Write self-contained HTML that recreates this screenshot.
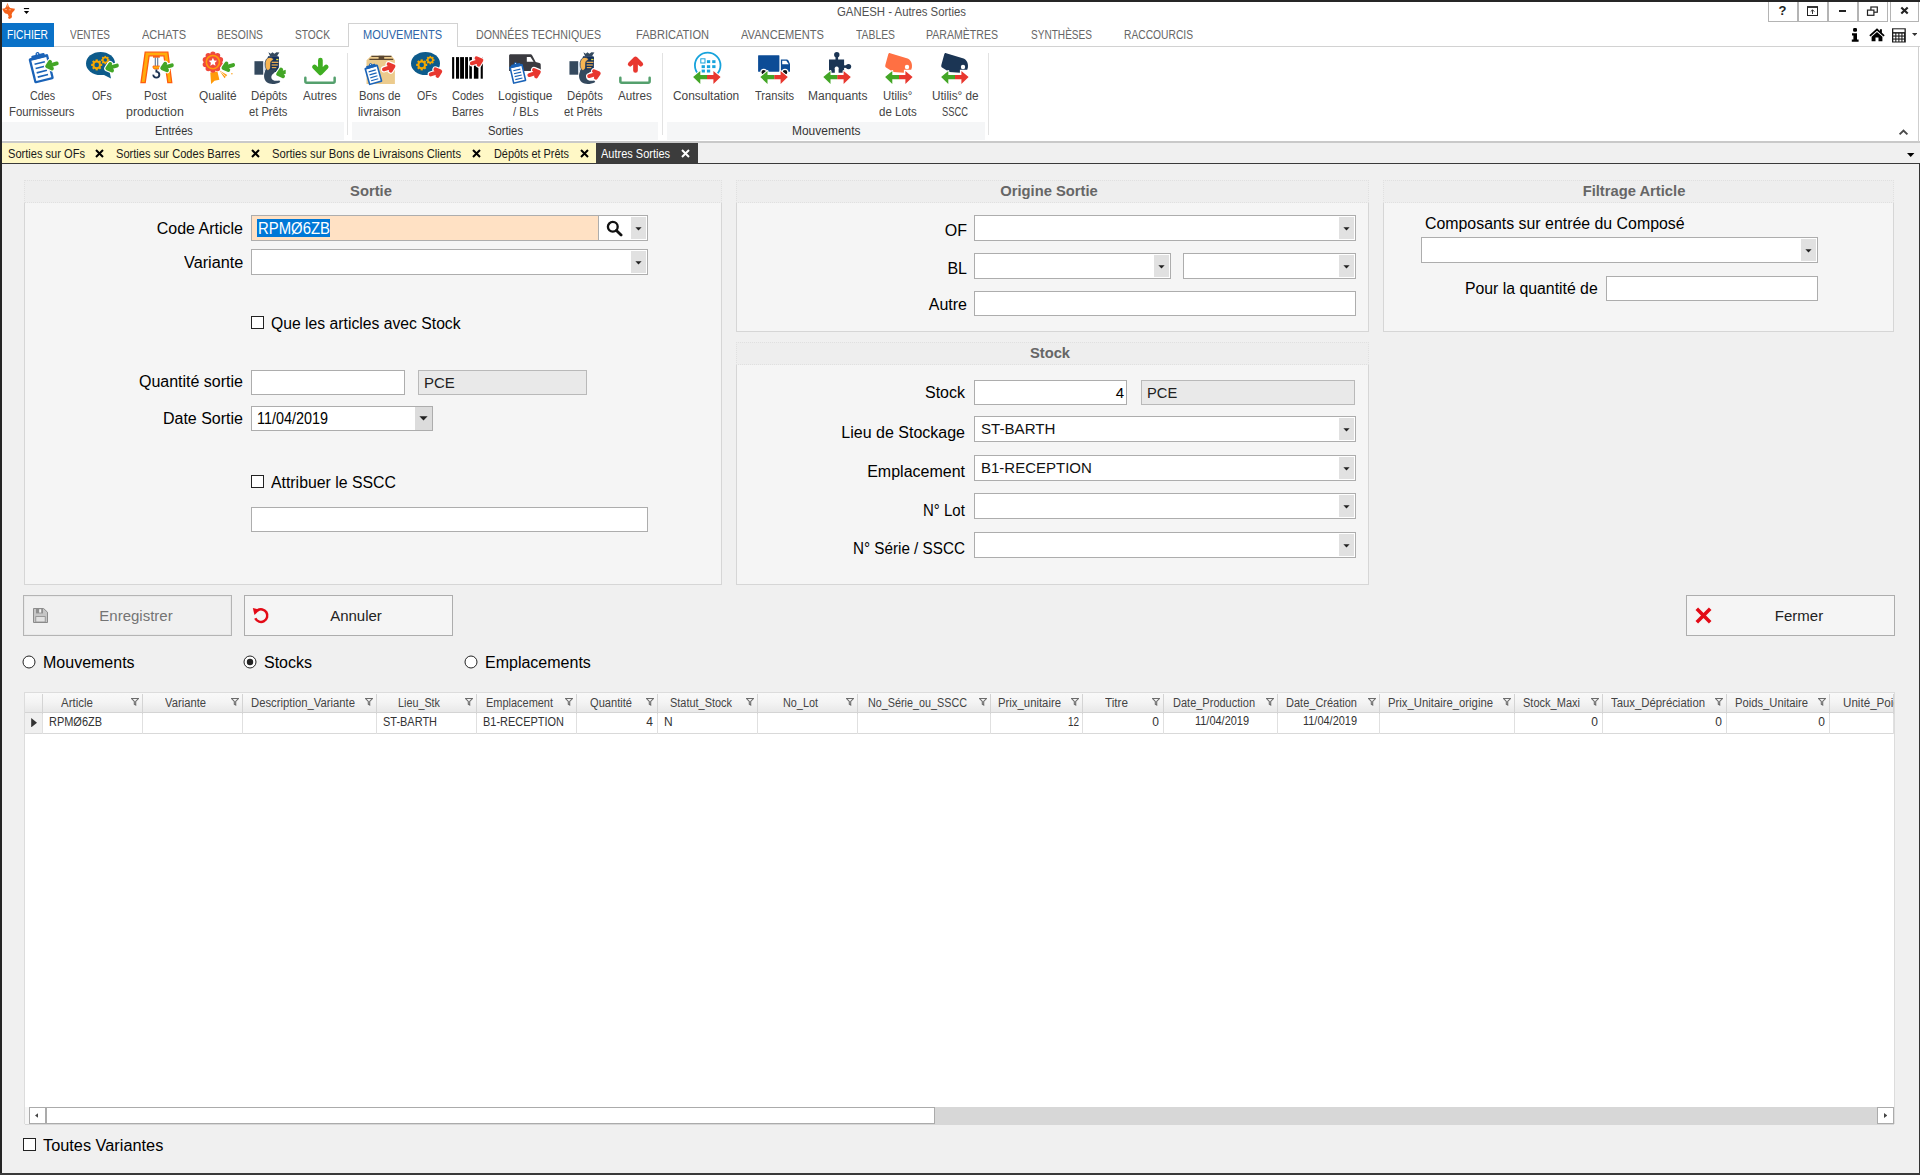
<!DOCTYPE html>
<html><head><meta charset="utf-8"><title>GANESH - Autres Sorties</title>
<style>
html,body{margin:0;padding:0;}
body{width:1920px;height:1175px;overflow:hidden;background:#f0f0f0;position:relative;
font-family:"Liberation Sans",sans-serif;}
#w{position:absolute;left:0;top:0;width:1920px;height:1175px;overflow:hidden;}
#w div,#w span.t,#w svg{position:absolute;box-sizing:border-box;}
span.t{white-space:pre;line-height:normal;}
</style></head><body><div id="w">
<div style="left:0px;top:0px;width:1920px;height:141px;background:#ffffff;"></div>
<div style="left:0px;top:141px;width:1920px;height:2px;background:#c9c9c9;"></div>
<svg style="left:0px;top:0px" width="18" height="22" viewBox="0 0 18 22"><path d="M7.5 3L8.9 6.6L10.2 8L15 8.7L14.2 10.7L12.4 12.6L11.6 14.6L12 16.4L11.4 18L9.4 18.9L8 18L8.7 16.3L7.6 14L5.4 13.6L4 12.2L2.2 8.8L5 8.2L6.1 6.6Z" fill="#f4611a"/><path d="M7.5 3.4L8.4 6.8H6.6Z" fill="#f9a36c"/><path d="M5 9.6H7M8.8 9.8H11" stroke="#fbb98b" stroke-width="0.8"/></svg>
<svg style="left:23px;top:7px" width="8" height="8" viewBox="0 0 8 8"><rect x="0.9" y="1" width="5.2" height="1.1" fill="#000"/><path d="M0.9 3.9h5.2L3.5 7z" fill="#000"/></svg>
<span class="t" style="left:837.00px;top:5px;font-size:12px;color:#505050;transform:scaleX(0.9482);transform-origin:0 0;">GANESH - Autres Sorties</span>
<div style="left:1768px;top:2px;width:30px;height:20px;background:#fff;border:1px solid #b4b4b4;border-top:none;"></div>
<div style="left:1798px;top:2px;width:30px;height:20px;background:#fff;border:1px solid #b4b4b4;border-top:none;"></div>
<div style="left:1828px;top:2px;width:30px;height:20px;background:#fff;border:1px solid #b4b4b4;border-top:none;"></div>
<div style="left:1858px;top:2px;width:30px;height:20px;background:#fff;border:1px solid #b4b4b4;border-top:none;"></div>
<div style="left:1890px;top:2px;width:29px;height:20px;background:#fff;border:1px solid #b4b4b4;border-top:none;"></div>
<span class="t" style="left:1778.6px;top:3px;font-size:13px;font-weight:bold;color:#222">?</span><svg style="left:1807px;top:6px" width="11" height="10" viewBox="0 0 11 10"><rect x="0.5" y="1" width="10" height="8.5" fill="none" stroke="#222" stroke-width="1"/><rect x="0" y="0.2" width="11" height="1.6" fill="#222"/><path d="M5.5 8V4M3.7 5.6L5.5 3.8L7.3 5.6" fill="none" stroke="#222" stroke-width="0.9"/></svg><div style="left:1839px;top:10px;width:7px;height:2px;background:#222"></div><svg style="left:1866px;top:6px" width="13" height="11" viewBox="0 0 13 11"><rect x="4.9" y="1" width="6.4" height="5.2" fill="none" stroke="#222" stroke-width="1.2"/><rect x="1.5" y="4.1" width="6.4" height="5.2" fill="#fff" stroke="#222" stroke-width="1.2"/></svg><svg style="left:1900px;top:6px" width="9" height="9" viewBox="0 0 9 9"><path d="M1.3 1.4L7.7 7.6M7.7 1.4L1.3 7.6" stroke="#222" stroke-width="2.1" fill="none"/></svg>
<svg style="left:1851px;top:28px" width="8" height="14" viewBox="0 0 8 14"><rect x="2.1" y="0" width="3.9" height="3.7" rx="1.2" fill="#000"/><path d="M1 5.2H6V11.4H7.6V13.8H0.8V11.4H2.4V7.4H1Z" fill="#000"/></svg><svg style="left:1869px;top:28px" width="16" height="14" viewBox="0 0 16 14"><path d="M8 0.3L0.3 7.2L1.5 8.5L8 2.8L14.5 8.5L15.7 7.2L12.9 4.7V1.2H10.9V2.9Z" fill="#000"/><path d="M8 4L2.6 8.7V13.2H6.5V9.4H9.5V13.2H13.4V8.7Z" fill="#000"/></svg><svg style="left:1892px;top:28px" width="14" height="15" viewBox="0 0 14 15"><rect x="0" y="0.3" width="13.8" height="14.2" fill="#1a1a1a"/><rect x="1.3" y="1.3" width="11.2" height="2.8" fill="#fff"/><rect x="1.30" y="5.60" width="2.0" height="1.9" fill="#fff"/><rect x="4.35" y="5.60" width="2.0" height="1.9" fill="#fff"/><rect x="7.40" y="5.60" width="2.0" height="1.9" fill="#fff"/><rect x="10.45" y="5.60" width="1.6" height="1.9" fill="#fff"/><rect x="1.30" y="8.60" width="2.0" height="1.9" fill="#fff"/><rect x="4.35" y="8.60" width="2.0" height="1.9" fill="#fff"/><rect x="7.40" y="8.60" width="2.0" height="1.9" fill="#fff"/><rect x="10.45" y="8.60" width="1.6" height="1.9" fill="#fff"/><rect x="1.30" y="11.60" width="2.0" height="1.9" fill="#fff"/><rect x="4.35" y="11.60" width="2.0" height="1.9" fill="#fff"/><rect x="7.40" y="11.60" width="2.0" height="1.9" fill="#fff"/><rect x="10.45" y="11.60" width="1.6" height="1.9" fill="#fff"/></svg><svg style="left:1911.8px;top:33.2px" width="5.4" height="3" viewBox="0 0 5.4 3"><path d="M0 0h5.4L2.7 3z" fill="#333"/></svg>
<div style="left:0px;top:46px;width:1920px;height:1px;background:#d2d2d2;"></div>
<div style="left:2px;top:23px;width:52px;height:24px;background:#0a72c8;"></div>
<span class="t" style="left:7.00px;top:28px;font-size:12px;color:#fff;transform:scaleX(0.8541);transform-origin:0 0;">FICHIER</span>
<span class="t" style="left:70.00px;top:28px;font-size:12px;color:#666;transform:scaleX(0.8331);transform-origin:0 0;">VENTES</span>
<span class="t" style="left:142.00px;top:28px;font-size:12px;color:#666;transform:scaleX(0.9208);transform-origin:0 0;">ACHATS</span>
<span class="t" style="left:217.00px;top:28px;font-size:12px;color:#666;transform:scaleX(0.8622);transform-origin:0 0;">BESOINS</span>
<span class="t" style="left:295.00px;top:28px;font-size:12px;color:#666;transform:scaleX(0.8511);transform-origin:0 0;">STOCK</span>
<span class="t" style="left:476.00px;top:28px;font-size:12px;color:#666;transform:scaleX(0.8857);transform-origin:0 0;">DONNÉES TECHNIQUES</span>
<span class="t" style="left:636.00px;top:28px;font-size:12px;color:#666;transform:scaleX(0.9226);transform-origin:0 0;">FABRICATION</span>
<span class="t" style="left:741.00px;top:28px;font-size:12px;color:#666;transform:scaleX(0.9266);transform-origin:0 0;">AVANCEMENTS</span>
<span class="t" style="left:856.00px;top:28px;font-size:12px;color:#666;transform:scaleX(0.8641);transform-origin:0 0;">TABLES</span>
<span class="t" style="left:926.00px;top:28px;font-size:12px;color:#666;transform:scaleX(0.8802);transform-origin:0 0;">PARAMÈTRES</span>
<span class="t" style="left:1031.00px;top:28px;font-size:12px;color:#666;transform:scaleX(0.8392);transform-origin:0 0;">SYNTHÈSES</span>
<span class="t" style="left:1124.00px;top:28px;font-size:12px;color:#666;transform:scaleX(0.8553);transform-origin:0 0;">RACCOURCIS</span>
<div style="left:348px;top:23px;width:110px;height:24px;background:#fff;border:1px solid #d2d2d2;border-bottom:none;"></div>
<span class="t" style="left:363.00px;top:28px;font-size:12px;color:#2b64a8;transform:scaleX(0.9185);transform-origin:0 0;">MOUVEMENTS</span>
<div style="left:2px;top:122px;width:342px;height:18px;background:#f5f6f7;"></div>
<div style="left:352px;top:122px;width:306px;height:18px;background:#f5f6f7;"></div>
<div style="left:667px;top:122px;width:318px;height:18px;background:#f5f6f7;"></div>
<div style="left:347px;top:53px;width:1px;height:82px;background:#e2e2e2;"></div>
<div style="left:662px;top:53px;width:1px;height:82px;background:#e2e2e2;"></div>
<div style="left:988px;top:53px;width:1px;height:82px;background:#e2e2e2;"></div>
<span class="t" style="left:155.40px;top:124px;font-size:12px;color:#333;transform:scaleX(0.9116);transform-origin:0 0;">Entrées</span>
<span class="t" style="left:488.10px;top:124px;font-size:12px;color:#333;transform:scaleX(0.9371);transform-origin:0 0;">Sorties</span>
<span class="t" style="left:791.50px;top:124px;font-size:12px;color:#333;transform:scaleX(0.9971);transform-origin:0 0;">Mouvements</span>
<span class="t" style="left:30.00px;top:89px;font-size:12px;color:#444;transform:scaleX(0.8924);transform-origin:0 0;">Cdes</span>
<span class="t" style="left:8.50px;top:105px;font-size:12px;color:#444;transform:scaleX(0.9443);transform-origin:0 0;">Fournisseurs</span>
<svg style="left:26px;top:52px;overflow:visible" width="32" height="32" viewBox="0 0 32 32"><g transform="translate(2.4 6.6) rotate(-14) scale(1.0)"><rect x="0" y="0" width="20" height="25.8" rx="1.6" fill="#1a63b8"/><rect x="2.3" y="2.8" width="15.4" height="20.8" fill="#fff"/><rect x="3.2" y="-1.9" width="13.6" height="4.4" rx="1.2" fill="#1a63b8"/><circle cx="10" cy="-2.1" r="2.1" fill="#1a63b8"/><circle cx="10" cy="-2.4" r="0.7" fill="#fff"/><path d="M4.6 7h10.6M4.6 11.4h10.6M4.6 15.8h10.6M4.6 20.2h10.6" stroke="#1a63b8" stroke-width="1.7" fill="none"/></g><path d="M5.1 0H-4.4M-0.9 -3.4L-4.9 0L-0.9 3.4" transform="translate(25.85 12.9) rotate(-16) scale(1.0)" fill="none" stroke="#fff" stroke-width="6.2" stroke-linecap="round" stroke-linejoin="round"/><path d="M5.1 0H-4.4M-0.9 -3.4L-4.9 0L-0.9 3.4" transform="translate(25.85 12.9) rotate(-16) scale(1.0)" fill="none" stroke="#43a626" stroke-width="3.9" stroke-linecap="round" stroke-linejoin="round"/></svg>
<span class="t" style="left:92.30px;top:89px;font-size:12px;color:#444;transform:scaleX(0.8648);transform-origin:0 0;">OFs</span>
<svg style="left:86px;top:52px;overflow:visible" width="32" height="32" viewBox="0 0 32 32"><ellipse cx="14.5" cy="11.5" rx="14.5" ry="11.5" fill="#0d5b8b"/><path d="M15 21.5L25 26.4L23.2 18Z" fill="#0d5b8b"/><g transform="translate(10.7 12.9)"><rect x="-1.10" y="-5.50" width="2.20" height="2.75" transform="rotate(0.0)" fill="#f6a800"/><rect x="-1.10" y="-5.50" width="2.20" height="2.75" transform="rotate(45.0)" fill="#f6a800"/><rect x="-1.10" y="-5.50" width="2.20" height="2.75" transform="rotate(90.0)" fill="#f6a800"/><rect x="-1.10" y="-5.50" width="2.20" height="2.75" transform="rotate(135.0)" fill="#f6a800"/><rect x="-1.10" y="-5.50" width="2.20" height="2.75" transform="rotate(180.0)" fill="#f6a800"/><rect x="-1.10" y="-5.50" width="2.20" height="2.75" transform="rotate(225.0)" fill="#f6a800"/><rect x="-1.10" y="-5.50" width="2.20" height="2.75" transform="rotate(270.0)" fill="#f6a800"/><rect x="-1.10" y="-5.50" width="2.20" height="2.75" transform="rotate(315.0)" fill="#f6a800"/><circle r="4.29" fill="#f6a800"/><circle r="2.31" fill="#0d5b8b"/></g><g transform="translate(19.3 8.1)"><rect x="-0.84" y="-4.20" width="1.68" height="2.10" transform="rotate(0.0)" fill="#f6a800"/><rect x="-0.84" y="-4.20" width="1.68" height="2.10" transform="rotate(45.0)" fill="#f6a800"/><rect x="-0.84" y="-4.20" width="1.68" height="2.10" transform="rotate(90.0)" fill="#f6a800"/><rect x="-0.84" y="-4.20" width="1.68" height="2.10" transform="rotate(135.0)" fill="#f6a800"/><rect x="-0.84" y="-4.20" width="1.68" height="2.10" transform="rotate(180.0)" fill="#f6a800"/><rect x="-0.84" y="-4.20" width="1.68" height="2.10" transform="rotate(225.0)" fill="#f6a800"/><rect x="-0.84" y="-4.20" width="1.68" height="2.10" transform="rotate(270.0)" fill="#f6a800"/><rect x="-0.84" y="-4.20" width="1.68" height="2.10" transform="rotate(315.0)" fill="#f6a800"/><circle r="3.28" fill="#f6a800"/><circle r="1.76" fill="#0d5b8b"/></g><path d="M5.1 0H-4.4M-0.9 -3.4L-4.9 0L-0.9 3.4" transform="translate(26 15) rotate(-16) scale(1.0)" fill="none" stroke="#fff" stroke-width="6.2" stroke-linecap="round" stroke-linejoin="round"/><path d="M5.1 0H-4.4M-0.9 -3.4L-4.9 0L-0.9 3.4" transform="translate(26 15) rotate(-16) scale(1.0)" fill="none" stroke="#43a626" stroke-width="3.9" stroke-linecap="round" stroke-linejoin="round"/></svg>
<span class="t" style="left:144.35px;top:89px;font-size:12px;color:#444;transform:scaleX(0.937);transform-origin:0 0;">Post</span>
<span class="t" style="left:126.45px;top:105px;font-size:12px;color:#444;transform:scaleX(1.0332);transform-origin:0 0;">production</span>
<svg style="left:139px;top:52px;overflow:visible" width="32" height="32" viewBox="0 0 32 32"><path d="M6.2 0.2H28.85L32.75 30.6H28.85L24.95 3.8H10.1L6.2 30.6H2Z" fill="#ffac0a" stroke="#ff5e0e" stroke-width="1.3"/><rect x="14" y="3.8" width="6.8" height="1.9" fill="#ff5e0e"/><path d="M16.3 5.6V14M18.7 5.6V14" stroke="#5b7594" stroke-width="1.1"/><path d="M14 14H20.8V15.4L19.8 17H15L14 15.4Z" fill="#ffac0a" stroke="#ff5e0e" stroke-width="0.8"/><path d="M17.4 17.4V19.6C21.4 20 21.2 25.6 17.4 25.6C15.2 25.6 14.2 24 14.4 22.6" fill="none" stroke="#1d3352" stroke-width="1.9"/><path d="M5.1 0H-4.4M-0.9 -3.4L-4.9 0L-0.9 3.4" transform="translate(27.95 14.75) rotate(-16) scale(1.0)" fill="none" stroke="#fff" stroke-width="6.2" stroke-linecap="round" stroke-linejoin="round"/><path d="M5.1 0H-4.4M-0.9 -3.4L-4.9 0L-0.9 3.4" transform="translate(27.95 14.75) rotate(-16) scale(1.0)" fill="none" stroke="#43a626" stroke-width="3.9" stroke-linecap="round" stroke-linejoin="round"/></svg>
<span class="t" style="left:199.35px;top:89px;font-size:12px;color:#444;transform:scaleX(0.9863);transform-origin:0 0;">Qualité</span>
<svg style="left:202px;top:52px;overflow:visible" width="32" height="32" viewBox="0 0 32 32"><path d="M8.3 20.6L9.1 31.9L12.5 28.8L17.4 27.8L15.4 19.6Z" fill="#ff9a0a"/><path d="M17.6 18.6L25.2 23.1L22.6 26.2L19.4 21.4Z" fill="#ff9a0a"/><path d="M18.9 19.7L23.9 24.7" stroke="#fff" stroke-width="0.9"/><circle cx="29.9" cy="21.8" r="0.7" fill="#ff9a0a"/><circle cx="18.41" cy="12.54" r="2.7" fill="#f0493c"/><circle cx="15.54" cy="16.49" r="2.7" fill="#f0493c"/><circle cx="10.90" cy="18.00" r="2.7" fill="#f0493c"/><circle cx="6.26" cy="16.49" r="2.7" fill="#f0493c"/><circle cx="3.39" cy="12.54" r="2.7" fill="#f0493c"/><circle cx="3.39" cy="7.66" r="2.7" fill="#f0493c"/><circle cx="6.26" cy="3.71" r="2.7" fill="#f0493c"/><circle cx="10.90" cy="2.20" r="2.7" fill="#f0493c"/><circle cx="15.54" cy="3.71" r="2.7" fill="#f0493c"/><circle cx="18.41" cy="7.66" r="2.7" fill="#f0493c"/><circle cx="10.9" cy="10.1" r="8.6" fill="#f0493c"/><circle cx="10.9" cy="10.1" r="6.6" fill="none" stroke="#ff9a0a" stroke-width="1.6"/><polygon points="10.90,5.70 12.13,8.40 15.08,8.74 12.90,10.75 13.49,13.66 10.90,12.20 8.31,13.66 8.90,10.75 6.72,8.74 9.67,8.40" fill="#fff"/><path d="M5.1 0H-4.4M-0.9 -3.4L-4.9 0L-0.9 3.4" transform="translate(26.2 14.5) rotate(-16) scale(1.0)" fill="none" stroke="#fff" stroke-width="6.2" stroke-linecap="round" stroke-linejoin="round"/><path d="M5.1 0H-4.4M-0.9 -3.4L-4.9 0L-0.9 3.4" transform="translate(26.2 14.5) rotate(-16) scale(1.0)" fill="none" stroke="#43a626" stroke-width="3.9" stroke-linecap="round" stroke-linejoin="round"/></svg>
<span class="t" style="left:251.48px;top:89px;font-size:12px;color:#444;transform:scaleX(0.9534);transform-origin:0 0;">Dépôts</span>
<span class="t" style="left:249.40px;top:105px;font-size:12px;color:#444;transform:scaleX(0.9287);transform-origin:0 0;">et Prêts</span>
<svg style="left:253px;top:52px;overflow:visible" width="32" height="32" viewBox="0 0 32 32"><clipPath id="cpb"><rect x="-2" y="-2" width="34.7" height="40"/></clipPath><g clip-path="url(#cpb)"><g transform="translate(0.4 0)"><path d="M15 0.3L17.4 1.7L19 0.2L21 1.7L23 0.2L26 0.4L24.3 3L23.6 4.6H16.8L16 2.8Z" fill="#34495e"/><path d="M14.6 4.2H24.6Q25.8 4.4 25.6 6L25.4 17.6L22.4 20H12.4Z" fill="#14305a"/><path d="M11.6 19.4C10 23 10.4 27.6 13.4 30.2C16.6 32.6 22 32.5 26.9 29.9L26 28.4C22 29.4 18.5 28.6 18 26C17.6 24 18.6 22.4 20.8 21L23 17.6H12Z" fill="#34495e"/><rect x="1.05" y="9.2" width="8.8" height="13.5" fill="#34495e"/><rect x="9.8" y="9.9" width="1.6" height="9.5" fill="#cfdcea"/><path d="M17.6 5.6C14 4.6 11.8 7.8 11.8 12C11.8 15.6 12.8 18.4 14.6 18.4C16.6 18.4 17.4 16 17.2 13C17 10.4 17.6 8.6 19.6 8.2C20.6 6.8 19.4 6 17.6 5.6Z" fill="#f7b552" stroke="#14305a" stroke-width="0.7"/><rect x="18.2" y="9.7" width="6.8" height="1.2" fill="#f7b552"/><rect x="18.2" y="12.4" width="6.2" height="1.2" fill="#f7b552"/><rect x="18.4" y="15.1" width="4.6" height="1.1" fill="#f7b552"/><rect x="22.8" y="6.9" width="2.2" height="1.3" fill="#e6e44a"/></g><path d="M5.1 0H-4.4M-0.9 -3.4L-4.9 0L-0.9 3.4" transform="translate(29.9 20.7) rotate(-16) scale(1.0)" fill="none" stroke="#fff" stroke-width="6.2" stroke-linecap="round" stroke-linejoin="round"/><path d="M5.1 0H-4.4M-0.9 -3.4L-4.9 0L-0.9 3.4" transform="translate(29.9 20.7) rotate(-16) scale(1.0)" fill="none" stroke="#43a626" stroke-width="3.9" stroke-linecap="round" stroke-linejoin="round"/></g></svg>
<span class="t" style="left:303.10px;top:89px;font-size:12px;color:#444;transform:scaleX(0.9745);transform-origin:0 0;">Autres</span>
<svg style="left:304px;top:52px;overflow:visible" width="32" height="32" viewBox="0 0 32 32"><path d="M16.4 8.2V20.6M10.5 14.9L16.4 20.9L22.2 14.9" fill="none" stroke="#3fae22" stroke-width="4.7" stroke-linecap="round" stroke-linejoin="round"/><path d="M1.35 25.7V29.2Q1.35 30.65 2.8 30.65H29.2Q30.65 30.65 30.65 29.2V25.7" fill="none" stroke="#54a06d" stroke-width="2.5" stroke-linecap="round"/></svg>
<span class="t" style="left:358.50px;top:89px;font-size:12px;color:#444;transform:scaleX(0.9424);transform-origin:0 0;">Bons de</span>
<span class="t" style="left:357.52px;top:105px;font-size:12px;color:#444;transform:scaleX(0.9712);transform-origin:0 0;">livraison</span>
<svg style="left:363px;top:52px;overflow:visible" width="32" height="32" viewBox="0 0 32 32"><path d="M8.2 3.8H28.6L31.9 8.2V31.9H3.5V8.2Z" fill="#eccb8d"/><path d="M8.4 4.4H28.4M6.4 7.4H30.2" stroke="#5a4630" stroke-width="1.3"/><rect x="15.6" y="3.8" width="5.6" height="4.2" fill="#5a4630"/><g transform="translate(1.2 16.05) rotate(-15.8) scale(0.7)"><rect x="0" y="0" width="20" height="25.8" rx="1.6" fill="#1a63b8"/><rect x="2.3" y="2.8" width="15.4" height="20.8" fill="#fff"/><rect x="3.2" y="-1.9" width="13.6" height="4.4" rx="1.2" fill="#1a63b8"/><circle cx="10" cy="-2.1" r="2.1" fill="#1a63b8"/><circle cx="10" cy="-2.4" r="0.7" fill="#fff"/><path d="M4.6 7h10.6M4.6 11.4h10.6M4.6 15.8h10.6M4.6 20.2h10.6" stroke="#1a63b8" stroke-width="1.7" fill="none"/></g><path d="M5.1 0H-4.4M-0.9 -3.4L-4.9 0L-0.9 3.4" transform="translate(25.8 15.7) rotate(162) scale(1.0)" fill="none" stroke="#fff" stroke-width="6.2" stroke-linecap="round" stroke-linejoin="round"/><path d="M5.1 0H-4.4M-0.9 -3.4L-4.9 0L-0.9 3.4" transform="translate(25.8 15.7) rotate(162) scale(1.0)" fill="none" stroke="#e8372f" stroke-width="3.9" stroke-linecap="round" stroke-linejoin="round"/></svg>
<span class="t" style="left:416.90px;top:89px;font-size:12px;color:#444;transform:scaleX(0.8825);transform-origin:0 0;">OFs</span>
<svg style="left:411px;top:52px;overflow:visible" width="32" height="32" viewBox="0 0 32 32"><ellipse cx="14.5" cy="11.5" rx="14.5" ry="11.5" fill="#0d5b8b"/><g transform="translate(10.7 12.9)"><rect x="-1.10" y="-5.50" width="2.20" height="2.75" transform="rotate(0.0)" fill="#f6a800"/><rect x="-1.10" y="-5.50" width="2.20" height="2.75" transform="rotate(45.0)" fill="#f6a800"/><rect x="-1.10" y="-5.50" width="2.20" height="2.75" transform="rotate(90.0)" fill="#f6a800"/><rect x="-1.10" y="-5.50" width="2.20" height="2.75" transform="rotate(135.0)" fill="#f6a800"/><rect x="-1.10" y="-5.50" width="2.20" height="2.75" transform="rotate(180.0)" fill="#f6a800"/><rect x="-1.10" y="-5.50" width="2.20" height="2.75" transform="rotate(225.0)" fill="#f6a800"/><rect x="-1.10" y="-5.50" width="2.20" height="2.75" transform="rotate(270.0)" fill="#f6a800"/><rect x="-1.10" y="-5.50" width="2.20" height="2.75" transform="rotate(315.0)" fill="#f6a800"/><circle r="4.29" fill="#f6a800"/><circle r="2.31" fill="#0d5b8b"/></g><g transform="translate(19.3 8.1)"><rect x="-0.84" y="-4.20" width="1.68" height="2.10" transform="rotate(0.0)" fill="#f6a800"/><rect x="-0.84" y="-4.20" width="1.68" height="2.10" transform="rotate(45.0)" fill="#f6a800"/><rect x="-0.84" y="-4.20" width="1.68" height="2.10" transform="rotate(90.0)" fill="#f6a800"/><rect x="-0.84" y="-4.20" width="1.68" height="2.10" transform="rotate(135.0)" fill="#f6a800"/><rect x="-0.84" y="-4.20" width="1.68" height="2.10" transform="rotate(180.0)" fill="#f6a800"/><rect x="-0.84" y="-4.20" width="1.68" height="2.10" transform="rotate(225.0)" fill="#f6a800"/><rect x="-0.84" y="-4.20" width="1.68" height="2.10" transform="rotate(270.0)" fill="#f6a800"/><rect x="-0.84" y="-4.20" width="1.68" height="2.10" transform="rotate(315.0)" fill="#f6a800"/><circle r="3.28" fill="#f6a800"/><circle r="1.76" fill="#0d5b8b"/></g><path d="M5.1 0H-4.4M-0.9 -3.4L-4.9 0L-0.9 3.4" transform="translate(24.6 20.9) rotate(162) scale(1.0)" fill="none" stroke="#fff" stroke-width="6.2" stroke-linecap="round" stroke-linejoin="round"/><path d="M5.1 0H-4.4M-0.9 -3.4L-4.9 0L-0.9 3.4" transform="translate(24.6 20.9) rotate(162) scale(1.0)" fill="none" stroke="#e8372f" stroke-width="3.9" stroke-linecap="round" stroke-linejoin="round"/></svg>
<span class="t" style="left:452.23px;top:89px;font-size:12px;color:#444;transform:scaleX(0.9153);transform-origin:0 0;">Codes</span>
<span class="t" style="left:451.50px;top:105px;font-size:12px;color:#444;transform:scaleX(0.894);transform-origin:0 0;">Barres</span>
<svg style="left:451px;top:52px;overflow:visible" width="32" height="32" viewBox="0 0 32 32"><rect x="1.1" y="5.1" width="2.1" height="21.6" fill="#000"/><rect x="5" y="5.1" width="3.1" height="21.6" fill="#000"/><rect x="9.1" y="5.1" width="3.9" height="21.6" fill="#000"/><rect x="14.1" y="5.1" width="2.9" height="21.6" fill="#000"/><rect x="18.3" y="5.1" width="2.6" height="21.6" fill="#000"/><rect x="22.9" y="5.1" width="4.5" height="21.6" fill="#000"/><rect x="29.7" y="5.1" width="2.1" height="21.6" fill="#000"/><path d="M5.1 0H-4.4M-0.9 -3.4L-4.9 0L-0.9 3.4" transform="translate(25.7 9.7) rotate(162) scale(1.0)" fill="none" stroke="#fff" stroke-width="6.2" stroke-linecap="round" stroke-linejoin="round"/><path d="M5.1 0H-4.4M-0.9 -3.4L-4.9 0L-0.9 3.4" transform="translate(25.7 9.7) rotate(162) scale(1.0)" fill="none" stroke="#e8372f" stroke-width="3.9" stroke-linecap="round" stroke-linejoin="round"/></svg>
<span class="t" style="left:497.50px;top:89px;font-size:12px;color:#444;transform:scaleX(0.9943);transform-origin:0 0;">Logistique</span>
<span class="t" style="left:512.50px;top:105px;font-size:12px;color:#444;transform:scaleX(0.9362);transform-origin:0 0;">/ BLs</span>
<svg style="left:508px;top:52px;overflow:visible" width="32" height="32" viewBox="0 0 32 32"><path d="M2.6 2.25H22C23.2 2.25 23.8 2.7 24.4 3.7L27.7 10L31.4 11C32.2 11.2 32.6 11.8 32.7 12.6L32.9 18.9H1.1V3.75C1.1 2.8 1.7 2.25 2.6 2.25Z" fill="#3a3a3f"/><path d="M18.8 5.1H22.5L25.6 9.8H18.8Z" fill="#fff"/><g transform="translate(1.1 14.75) rotate(-13) scale(0.69)"><rect x="0" y="0" width="20" height="25.8" rx="1.6" fill="#1a63b8"/><rect x="2.3" y="2.8" width="15.4" height="20.8" fill="#fff"/><rect x="3.2" y="-1.9" width="13.6" height="4.4" rx="1.2" fill="#1a63b8"/><circle cx="10" cy="-2.1" r="2.1" fill="#1a63b8"/><circle cx="10" cy="-2.4" r="0.7" fill="#fff"/><path d="M4.6 7h10.6M4.6 11.4h10.6M4.6 15.8h10.6M4.6 20.2h10.6" stroke="#1a63b8" stroke-width="1.7" fill="none"/></g><path d="M5.1 0H-4.4M-0.9 -3.4L-4.9 0L-0.9 3.4" transform="translate(26.2 21.5) rotate(162) scale(1.0)" fill="none" stroke="#fff" stroke-width="6.2" stroke-linecap="round" stroke-linejoin="round"/><path d="M5.1 0H-4.4M-0.9 -3.4L-4.9 0L-0.9 3.4" transform="translate(26.2 21.5) rotate(162) scale(1.0)" fill="none" stroke="#e8372f" stroke-width="3.9" stroke-linecap="round" stroke-linejoin="round"/></svg>
<span class="t" style="left:566.85px;top:89px;font-size:12px;color:#444;transform:scaleX(0.9442);transform-origin:0 0;">Dépôts</span>
<span class="t" style="left:564.40px;top:105px;font-size:12px;color:#444;transform:scaleX(0.9287);transform-origin:0 0;">et Prêts</span>
<svg style="left:568px;top:52px;overflow:visible" width="32" height="32" viewBox="0 0 32 32"><g transform="translate(0.4 0)"><path d="M15 0.3L17.4 1.7L19 0.2L21 1.7L23 0.2L26 0.4L24.3 3L23.6 4.6H16.8L16 2.8Z" fill="#34495e"/><path d="M14.6 4.2H24.6Q25.8 4.4 25.6 6L25.4 17.6L22.4 20H12.4Z" fill="#14305a"/><path d="M11.6 19.4C10 23 10.4 27.6 13.4 30.2C16.6 32.6 22 32.5 26.9 29.9L26 28.4C22 29.4 18.5 28.6 18 26C17.6 24 18.6 22.4 20.8 21L23 17.6H12Z" fill="#34495e"/><rect x="1.05" y="9.2" width="8.8" height="13.5" fill="#34495e"/><rect x="9.8" y="9.9" width="1.6" height="9.5" fill="#cfdcea"/><path d="M17.6 5.6C14 4.6 11.8 7.8 11.8 12C11.8 15.6 12.8 18.4 14.6 18.4C16.6 18.4 17.4 16 17.2 13C17 10.4 17.6 8.6 19.6 8.2C20.6 6.8 19.4 6 17.6 5.6Z" fill="#f7b552" stroke="#14305a" stroke-width="0.7"/><rect x="18.2" y="9.7" width="6.8" height="1.2" fill="#f7b552"/><rect x="18.2" y="12.4" width="6.2" height="1.2" fill="#f7b552"/><rect x="18.4" y="15.1" width="4.6" height="1.1" fill="#f7b552"/><rect x="22.8" y="6.9" width="2.2" height="1.3" fill="#e6e44a"/></g><path d="M5.1 0H-4.4M-0.9 -3.4L-4.9 0L-0.9 3.4" transform="translate(26.05 22.7) rotate(164) scale(1.0)" fill="none" stroke="#fff" stroke-width="6.2" stroke-linecap="round" stroke-linejoin="round"/><path d="M5.1 0H-4.4M-0.9 -3.4L-4.9 0L-0.9 3.4" transform="translate(26.05 22.7) rotate(164) scale(1.0)" fill="none" stroke="#e8372f" stroke-width="3.9" stroke-linecap="round" stroke-linejoin="round"/></svg>
<span class="t" style="left:618.10px;top:89px;font-size:12px;color:#444;transform:scaleX(0.9745);transform-origin:0 0;">Autres</span>
<svg style="left:619px;top:52px;overflow:visible" width="32" height="32" viewBox="0 0 32 32"><path d="M16.5 18.4V7M11.2 12.2L16.5 6.9L21.8 12.2" fill="none" stroke="#e8372f" stroke-width="4.7" stroke-linecap="round" stroke-linejoin="round"/><path d="M1.35 25.7V29.2Q1.35 30.65 2.8 30.65H29.2Q30.65 30.65 30.65 29.2V25.7" fill="none" stroke="#54a06d" stroke-width="2.5" stroke-linecap="round"/></svg>
<span class="t" style="left:673.12px;top:89px;font-size:12px;color:#444;transform:scaleX(0.9931);transform-origin:0 0;">Consultation</span>
<svg style="left:690px;top:52px;overflow:visible" width="32" height="32" viewBox="0 0 32 32"><circle cx="17.7" cy="13.35" r="12.8" fill="none" stroke="#17a3dc" stroke-width="1.8"/><rect x="10.8" y="6.8" width="4.2" height="4.2" fill="#fff" stroke="#17a3dc" stroke-width="1"/><rect x="16.9" y="8.2" width="3.3" height="2.9" fill="#17a3dc"/><rect x="22.2" y="8.2" width="3.3" height="2.9" fill="#17a3dc"/><rect x="11.6" y="13.2" width="3.3" height="2.9" fill="#17a3dc"/><rect x="16.9" y="13.2" width="3.3" height="2.9" fill="#17a3dc"/><rect x="22.2" y="13.2" width="3.3" height="2.9" fill="#17a3dc"/><rect x="11.6" y="17.6" width="3.3" height="2.9" fill="#17a3dc"/><rect x="16.9" y="17.6" width="3.3" height="2.9" fill="#17a3dc"/><g transform="translate(0.0 0)"><path d="M3.1 25.1L10.3 19.1V22.9H17V27.3H10.3V31.9ZM30.6 25.1L23.4 19.1V22.9H17V27.3H23.4V31.9Z" fill="#fff" stroke="#fff" stroke-width="2" stroke-linejoin="round"/><path d="M30.6 25.1L23.4 19.1V22.9H17V27.3H23.4V31.9Z" fill="#e8372f"/><path d="M3.1 25.1L10.3 19.1V22.9H17V27.3H10.3V31.9Z" fill="#43a626"/></g></svg>
<span class="t" style="left:755.00px;top:89px;font-size:12px;color:#444;transform:scaleX(0.9235);transform-origin:0 0;">Transits</span>
<svg style="left:758px;top:52px;overflow:visible" width="32" height="32" viewBox="0 0 32 32"><rect x="0.1" y="3.2" width="21.3" height="16.55" rx="0.6" fill="#0c4c96"/><path d="M22.9 7.6H28.4C29.6 7.6 30.3 8.2 30.9 9.4L32 12V19.75H22.9Z" fill="#0c4c96"/><path d="M24.2 8.8H28.25L30.75 12.25H24.2Z" fill="#fff"/><circle cx="5.75" cy="20.2" r="2.9" fill="#111" stroke="#fff" stroke-width="1.2"/><circle cx="27" cy="20.2" r="2.9" fill="#111" stroke="#fff" stroke-width="1.2"/><g transform="translate(-0.8 0)"><path d="M3.1 25.1L10.3 19.1V22.9H17V27.3H10.3V31.9ZM30.6 25.1L23.4 19.1V22.9H17V27.3H23.4V31.9Z" fill="#fff" stroke="#fff" stroke-width="2" stroke-linejoin="round"/><path d="M30.6 25.1L23.4 19.1V22.9H17V27.3H23.4V31.9Z" fill="#e8372f"/><path d="M3.1 25.1L10.3 19.1V22.9H17V27.3H10.3V31.9Z" fill="#43a626"/></g></svg>
<span class="t" style="left:807.50px;top:89px;font-size:12px;color:#444;transform:scaleX(1.0004);transform-origin:0 0;">Manquants</span>
<svg style="left:821px;top:52px;overflow:visible" width="32" height="32" viewBox="0 0 32 32"><circle cx="15.8" cy="2.7" r="2.7" fill="#1b3554"/><rect x="14.5" y="4" width="2.6" height="4.4" fill="#1b3554"/><circle cx="27.5" cy="14.6" r="2.7" fill="#1b3554"/><rect x="22.6" y="13.3" width="3.6" height="2.6" fill="#1b3554"/><path d="M8 7.5H23.1V20.8H17.6V17.6A2.1 2.1 0 1 0 13.8 17.6V20.8H8Z" fill="#1b3554"/><g transform="translate(-0.8 0)"><path d="M3.1 25.1L10.3 19.1V22.9H17V27.3H10.3V31.9ZM30.6 25.1L23.4 19.1V22.9H17V27.3H23.4V31.9Z" fill="#fff" stroke="#fff" stroke-width="2" stroke-linejoin="round"/><path d="M30.6 25.1L23.4 19.1V22.9H17V27.3H23.4V31.9Z" fill="#e8372f"/><path d="M3.1 25.1L10.3 19.1V22.9H17V27.3H10.3V31.9Z" fill="#43a626"/></g></svg>
<span class="t" style="left:883.48px;top:89px;font-size:12px;color:#444;transform:scaleX(0.9497);transform-origin:0 0;">Utilis°</span>
<span class="t" style="left:879.38px;top:105px;font-size:12px;color:#444;transform:scaleX(0.959);transform-origin:0 0;">de Lots</span>
<svg style="left:882px;top:52px;overflow:visible" width="32" height="32" viewBox="0 0 32 32"><path d="M8.2 1.2L25.6 6.6C28.4 7.6 30.6 11.6 29.9 15.4L29.2 17.7H21.9V20.8L11.3 19.9L4 15.6C3.2 15 3.1 14 3.4 12.8L6.2 2.6C6.5 1.4 7.2 0.9 8.2 1.2Z" fill="#ff7043"/><circle cx="25" cy="15" r="2.2" fill="#fff"/><g transform="translate(0.0 0)"><path d="M3.1 25.1L10.3 19.1V22.9H17V27.3H10.3V31.9ZM30.6 25.1L23.4 19.1V22.9H17V27.3H23.4V31.9Z" fill="#fff" stroke="#fff" stroke-width="2" stroke-linejoin="round"/><path d="M30.6 25.1L23.4 19.1V22.9H17V27.3H23.4V31.9Z" fill="#e8372f"/><path d="M3.1 25.1L10.3 19.1V22.9H17V27.3H10.3V31.9Z" fill="#43a626"/></g></svg>
<span class="t" style="left:931.50px;top:89px;font-size:12px;color:#444;transform:scaleX(0.9815);transform-origin:0 0;">Utilis° de</span>
<span class="t" style="left:941.65px;top:105px;font-size:12px;color:#444;transform:scaleX(0.7768);transform-origin:0 0;">SSCC</span>
<svg style="left:938px;top:52px;overflow:visible" width="32" height="32" viewBox="0 0 32 32"><path d="M8.2 1.2L25.6 6.6C28.4 7.6 30.6 11.6 29.9 15.4L29.2 17.7H21.9V20.8L11.3 19.9L4 15.6C3.2 15 3.1 14 3.4 12.8L6.2 2.6C6.5 1.4 7.2 0.9 8.2 1.2Z" fill="#1b3554"/><circle cx="25" cy="15" r="2.2" fill="#fff"/><g transform="translate(0.0 0)"><path d="M3.1 25.1L10.3 19.1V22.9H17V27.3H10.3V31.9ZM30.6 25.1L23.4 19.1V22.9H17V27.3H23.4V31.9Z" fill="#fff" stroke="#fff" stroke-width="2" stroke-linejoin="round"/><path d="M30.6 25.1L23.4 19.1V22.9H17V27.3H23.4V31.9Z" fill="#e8372f"/><path d="M3.1 25.1L10.3 19.1V22.9H17V27.3H10.3V31.9Z" fill="#43a626"/></g></svg>
<svg style="left:1898px;top:128px" width="11" height="8" viewBox="0 0 11 8"><path d="M1.6 6.4L5.5 2.5L9.4 6.4" fill="none" stroke="#4a4a4a" stroke-width="1.9"/></svg>
<div style="left:2px;top:143px;width:594px;height:20px;background:#fff8c6;"></div>
<div style="left:596px;top:143px;width:102px;height:20px;background:#3c3c3c;"></div>
<div style="left:0px;top:163px;width:1920px;height:1px;background:#3a3a3a;"></div>
<span class="t" style="left:8.00px;top:147px;font-size:12px;color:#1a1a1a;transform:scaleX(0.9238);transform-origin:0 0;">Sorties sur OFs</span>
<svg style="left:94.5px;top:149.0px" width="9" height="9" viewBox="0 0 9 9"><path d="M1 1L8 8M8 1L1 8" stroke="#000" stroke-width="2" fill="none"/></svg>
<span class="t" style="left:116.00px;top:147px;font-size:12px;color:#1a1a1a;transform:scaleX(0.925);transform-origin:0 0;">Sorties sur Codes Barres</span>
<svg style="left:250.5px;top:149.0px" width="9" height="9" viewBox="0 0 9 9"><path d="M1 1L8 8M8 1L1 8" stroke="#000" stroke-width="2" fill="none"/></svg>
<span class="t" style="left:272.00px;top:147px;font-size:12px;color:#1a1a1a;transform:scaleX(0.9352);transform-origin:0 0;">Sorties sur Bons de Livraisons Clients</span>
<svg style="left:471.5px;top:149.0px" width="9" height="9" viewBox="0 0 9 9"><path d="M1 1L8 8M8 1L1 8" stroke="#000" stroke-width="2" fill="none"/></svg>
<span class="t" style="left:494.00px;top:147px;font-size:12px;color:#1a1a1a;transform:scaleX(0.9068);transform-origin:0 0;">Dépôts et Prêts</span>
<svg style="left:579.5px;top:149.0px" width="9" height="9" viewBox="0 0 9 9"><path d="M1 1L8 8M8 1L1 8" stroke="#000" stroke-width="2" fill="none"/></svg>
<span class="t" style="left:601.00px;top:147px;font-size:12px;color:#fff;transform:scaleX(0.9155);transform-origin:0 0;">Autres Sorties</span>
<svg style="left:680.5px;top:149.0px" width="9" height="9" viewBox="0 0 9 9"><path d="M1 1L8 8M8 1L1 8" stroke="#fff" stroke-width="2" fill="none"/></svg>
<svg style="left:1907px;top:153px" width="8" height="4" viewBox="0 0 8 4"><path d="M0 0h7.4L3.7 4z" fill="#000"/></svg>
<div style="left:0px;top:0px;width:1920px;height:2px;background:#262626;"></div>
<div style="left:0px;top:0px;width:2px;height:1175px;background:#242424;"></div>
<div style="left:1919px;top:163px;width:1px;height:1012px;background:#333333;"></div>
<div style="left:1918px;top:46px;width:1px;height:96px;background:#cfcfcf;"></div>
<div style="left:0px;top:1173px;width:1920px;height:2px;background:#3a3a3a;"></div>
<div style="left:24px;top:180px;width:698px;height:23px;background:#eeeeee;border:1px dotted #e0e0e0;"></div>
<div style="left:24px;top:203px;width:698px;height:382px;background:#f5f5f5;border:1px solid #d6d6d6;border-top:none;"></div>
<span class="t" style="left:350.10px;top:183px;font-size:14.75px;color:#666;font-weight:bold;">Sortie</span>
<span class="t" style="left:156.73px;top:220px;font-size:16px;color:#000;">Code Article</span>
<div style="left:251px;top:215px;width:397px;height:26px;background:#fff;border:1px solid #adadad;"></div>
<div style="left:252px;top:216px;width:346px;height:24px;background:#ffe1c4;"></div>
<div style="left:598px;top:216px;width:1px;height:24px;background:#adadad;"></div>
<div style="left:257px;top:219px;width:73.3px;height:18px;background:#0078d7;"></div>
<span class="t" style="left:258.00px;top:220px;font-size:16px;color:#fff;transform:scaleX(0.9309);transform-origin:0 0;">RPMØ6ZB</span>
<svg style="left:605.5px;top:219.8px" width="17" height="17" viewBox="0 0 16 16"><circle cx="6.4" cy="6.4" r="4.6" fill="none" stroke="#111" stroke-width="2.2"/><path d="M9.8 9.8L14.2 14.2" stroke="#111" stroke-width="2.6" stroke-linecap="round"/></svg>
<div style="left:631px;top:217px;width:15px;height:22px;background:#e1e1e1;"></div>
<svg style="left:635px;top:227px" width="7" height="4" viewBox="0 0 7 4"><path d="M0.4 0.2h6.2L3.5 3.6z" fill="#222"/></svg>
<span class="t" style="left:183.60px;top:254px;font-size:16px;color:#000;transform:scaleX(1.017);transform-origin:0 0;">Variante</span>
<div style="left:251px;top:249px;width:397px;height:26px;background:#fff;border:1px solid #adadad;"></div>
<div style="left:631px;top:251px;width:15px;height:22px;background:#e1e1e1;"></div>
<svg style="left:635.0px;top:260.5px" width="7" height="4" viewBox="0 0 7 4"><path d="M0.4 0.2h6.2L3.5 3.6z" fill="#222"/></svg>
<div style="left:251px;top:316px;width:13px;height:13px;background:#fff;border:1px solid #222;"></div>
<span class="t" style="left:271.00px;top:315px;font-size:16px;color:#000;transform:scaleX(0.9825);transform-origin:0 0;">Que les articles avec Stock</span>
<span class="t" style="left:138.94px;top:373px;font-size:16px;color:#000;">Quantité sortie</span>
<div style="left:251px;top:370px;width:154px;height:25px;background:#fff;border:1px solid #adadad;"></div>
<div style="left:418px;top:370px;width:169px;height:25px;background:#e9e9e9;border:1px solid #b9b9b9;"></div>
<span class="t" style="left:424.00px;top:374.5px;font-size:14.5px;color:#222;transform:scaleX(1.033);transform-origin:0 0;">PCE</span>
<span class="t" style="left:162.96px;top:410px;font-size:16px;color:#000;">Date Sortie</span>
<div style="left:251px;top:406px;width:182px;height:25px;background:#fff;border:1px solid #adadad;"></div>
<span class="t" style="left:257.00px;top:410px;font-size:16px;color:#000;transform:scaleX(0.9);transform-origin:0 0;">11/04/2019</span>
<div style="left:415px;top:407px;width:17px;height:23px;background:#dcdcdc;"></div>
<svg style="left:419px;top:416px" width="9" height="5" viewBox="0 0 9 5"><path d="M0.4 0.2h8.2L4.5 4.6z" fill="#222"/></svg>
<div style="left:251px;top:475px;width:13px;height:13px;background:#fff;border:1px solid #222;"></div>
<span class="t" style="left:271.00px;top:474px;font-size:16px;color:#000;transform:scaleX(0.9892);transform-origin:0 0;">Attribuer le SSCC</span>
<div style="left:251px;top:507px;width:397px;height:25px;background:#fff;border:1px solid #adadad;"></div>
<div style="left:736px;top:180px;width:633px;height:23px;background:#eeeeee;border:1px dotted #e0e0e0;"></div>
<div style="left:736px;top:203px;width:633px;height:129px;background:#f5f5f5;border:1px solid #d6d6d6;border-top:none;"></div>
<span class="t" style="left:1000.23px;top:183px;font-size:14.75px;color:#666;font-weight:bold;">Origine Sortie</span>
<span class="t" style="left:944.78px;top:222px;font-size:16px;color:#000;">OF</span>
<div style="left:974px;top:215px;width:382px;height:26px;background:#fff;border:1px solid #adadad;"></div>
<div style="left:1339px;top:217px;width:15px;height:22px;background:#e1e1e1;"></div>
<svg style="left:1343.0px;top:226.5px" width="7" height="4" viewBox="0 0 7 4"><path d="M0.4 0.2h6.2L3.5 3.6z" fill="#222"/></svg>
<span class="t" style="left:947.43px;top:260px;font-size:16px;color:#000;">BL</span>
<div style="left:974px;top:253px;width:197px;height:26px;background:#fff;border:1px solid #adadad;"></div>
<div style="left:1154px;top:255px;width:15px;height:22px;background:#e1e1e1;"></div>
<svg style="left:1158.0px;top:264.5px" width="7" height="4" viewBox="0 0 7 4"><path d="M0.4 0.2h6.2L3.5 3.6z" fill="#222"/></svg>
<div style="left:1183px;top:253px;width:173px;height:26px;background:#fff;border:1px solid #adadad;"></div>
<div style="left:1339px;top:255px;width:15px;height:22px;background:#e1e1e1;"></div>
<svg style="left:1343.0px;top:264.5px" width="7" height="4" viewBox="0 0 7 4"><path d="M0.4 0.2h6.2L3.5 3.6z" fill="#222"/></svg>
<span class="t" style="left:928.76px;top:296px;font-size:16px;color:#000;">Autre</span>
<div style="left:974px;top:291px;width:382px;height:25px;background:#fff;border:1px solid #adadad;"></div>
<div style="left:736px;top:342px;width:633px;height:23px;background:#eeeeee;border:1px dotted #e0e0e0;"></div>
<div style="left:736px;top:365px;width:633px;height:220px;background:#f5f5f5;border:1px solid #d6d6d6;border-top:none;"></div>
<span class="t" style="left:1029.92px;top:345px;font-size:14.75px;color:#666;font-weight:bold;">Stock</span>
<span class="t" style="left:924.98px;top:384px;font-size:16px;color:#000;">Stock</span>
<div style="left:974px;top:380px;width:153px;height:25px;background:#fff;border:1px solid #adadad;"></div>
<span class="t" style="left:1115.66px;top:384px;font-size:15px;color:#000;">4</span>
<div style="left:1141px;top:380px;width:214px;height:25px;background:#e9e9e9;border:1px solid #b9b9b9;"></div>
<span class="t" style="left:1147.00px;top:385px;font-size:14.5px;color:#222;transform:scaleX(1.0129);transform-origin:0 0;">PCE</span>
<span class="t" style="left:841.35px;top:424px;font-size:16px;color:#000;">Lieu de Stockage</span>
<div style="left:974px;top:416px;width:382px;height:26px;background:#fff;border:1px solid #adadad;"></div>
<div style="left:1339px;top:418px;width:15px;height:22px;background:#e1e1e1;"></div>
<svg style="left:1343.0px;top:427.5px" width="7" height="4" viewBox="0 0 7 4"><path d="M0.4 0.2h6.2L3.5 3.6z" fill="#222"/></svg>
<span class="t" style="left:981.00px;top:420px;font-size:15px;color:#111;transform:scaleX(1.0067);transform-origin:0 0;">ST-BARTH</span>
<span class="t" style="left:867.18px;top:463px;font-size:16px;color:#000;">Emplacement</span>
<div style="left:974px;top:455px;width:382px;height:26px;background:#fff;border:1px solid #adadad;"></div>
<div style="left:1339px;top:457px;width:15px;height:22px;background:#e1e1e1;"></div>
<svg style="left:1343.0px;top:466.5px" width="7" height="4" viewBox="0 0 7 4"><path d="M0.4 0.2h6.2L3.5 3.6z" fill="#222"/></svg>
<span class="t" style="left:981.00px;top:459px;font-size:15px;color:#111;">B1-RECEPTION</span>
<span class="t" style="left:923.20px;top:502px;font-size:16px;color:#000;transform:scaleX(0.9364);transform-origin:0 0;">N° Lot</span>
<div style="left:974px;top:493px;width:382px;height:26px;background:#fff;border:1px solid #adadad;"></div>
<div style="left:1339px;top:495px;width:15px;height:22px;background:#e1e1e1;"></div>
<svg style="left:1343.0px;top:504.5px" width="7" height="4" viewBox="0 0 7 4"><path d="M0.4 0.2h6.2L3.5 3.6z" fill="#222"/></svg>
<span class="t" style="left:853.10px;top:540px;font-size:16px;color:#000;transform:scaleX(0.952);transform-origin:0 0;">N° Série / SSCC</span>
<div style="left:974px;top:532px;width:382px;height:26px;background:#fff;border:1px solid #adadad;"></div>
<div style="left:1339px;top:534px;width:15px;height:22px;background:#e1e1e1;"></div>
<svg style="left:1343.0px;top:543.5px" width="7" height="4" viewBox="0 0 7 4"><path d="M0.4 0.2h6.2L3.5 3.6z" fill="#222"/></svg>
<div style="left:1383px;top:180px;width:511px;height:23px;background:#eeeeee;border:1px dotted #e0e0e0;"></div>
<div style="left:1383px;top:203px;width:511px;height:129px;background:#f5f5f5;border:1px solid #d6d6d6;border-top:none;"></div>
<span class="t" style="left:1582.63px;top:183px;font-size:14.75px;color:#666;font-weight:bold;">Filtrage Article</span>
<span class="t" style="left:1425.00px;top:215px;font-size:16px;color:#000;transform:scaleX(0.9928);transform-origin:0 0;">Composants sur entrée du Composé</span>
<div style="left:1421px;top:237px;width:397px;height:26px;background:#fff;border:1px solid #adadad;"></div>
<div style="left:1801px;top:239px;width:15px;height:22px;background:#e1e1e1;"></div>
<svg style="left:1805.0px;top:248.5px" width="7" height="4" viewBox="0 0 7 4"><path d="M0.4 0.2h6.2L3.5 3.6z" fill="#222"/></svg>
<span class="t" style="left:1465.30px;top:280px;font-size:16px;color:#000;transform:scaleX(0.9879);transform-origin:0 0;">Pour la quantité de</span>
<div style="left:1606px;top:276px;width:212px;height:25px;background:#fff;border:1px solid #adadad;"></div>
<div style="left:23px;top:595px;width:209px;height:41px;background:#f0f0f0;border:1px solid #b4b4b4;"></div>
<div style="left:24px;top:596px;width:207px;height:39px;border:1px solid #e9e9e9;"></div>
<span class="t" style="left:99.32px;top:607px;font-size:15px;color:#747474;">Enregistrer</span>
<svg style="left:33px;top:607.6px" width="15" height="15" viewBox="0 0 15 15"><path d="M0.5 0.5H10.6L14.5 4.2V14.5H0.5Z" fill="#c6c6c6" stroke="#8b8b8b" stroke-width="1"/><rect x="3" y="0.8" width="7" height="4.6" fill="#8f8f8f"/><rect x="6.2" y="1.2" width="2" height="3.4" fill="#f4f4f4"/><rect x="2.8" y="8.6" width="9.4" height="5.4" fill="#e2e2e2" stroke="#8b8b8b" stroke-width="0.8"/></svg>
<div style="left:244px;top:595px;width:209px;height:41px;background:#f5f5f5;border:1px solid #adadad;"></div>
<span class="t" style="left:330.15px;top:607px;font-size:15px;color:#222;">Annuler</span>
<svg style="left:252px;top:606px" width="18" height="18" viewBox="0 0 18 18"><path d="M5.4 4.4A6.3 6.3 0 1 1 3.3 12.3" fill="none" stroke="#e30b17" stroke-width="2.5"/><path d="M0.8 1.9L8 3.7L2.5 8.9Z" fill="#e30b17"/></svg>
<div style="left:1686px;top:595px;width:209px;height:41px;background:#f5f5f5;border:1px solid #adadad;"></div>
<span class="t" style="left:1774.83px;top:607px;font-size:15px;color:#222;">Fermer</span>
<svg style="left:1694.5px;top:607px" width="17" height="17" viewBox="0 0 17 17"><path d="M1.8 1.8L15.2 15.2M15.2 1.8L1.8 15.2" stroke="#e30b17" stroke-width="3.6" fill="none"/></svg>
<svg style="left:22px;top:654.9px" width="14" height="14" viewBox="0 0 14 14"><circle cx="7" cy="7" r="6" fill="#fff" stroke="#222" stroke-width="1"/></svg>
<span class="t" style="left:43.00px;top:654px;font-size:16px;color:#000;">Mouvements</span>
<svg style="left:243px;top:654.9px" width="14" height="14" viewBox="0 0 14 14"><circle cx="7" cy="7" r="6" fill="#fff" stroke="#222" stroke-width="1"/><circle cx="7" cy="7" r="3.2" fill="#222"/></svg>
<span class="t" style="left:264.00px;top:654px;font-size:16px;color:#000;">Stocks</span>
<svg style="left:464px;top:654.9px" width="14" height="14" viewBox="0 0 14 14"><circle cx="7" cy="7" r="6" fill="#fff" stroke="#222" stroke-width="1"/></svg>
<span class="t" style="left:485.00px;top:654px;font-size:16px;color:#000;">Emplacements</span>
<div style="left:23px;top:1138px;width:13px;height:13px;background:#fff;border:1px solid #222;"></div>
<span class="t" style="left:43.40px;top:1137px;font-size:16px;color:#000;transform:scaleX(1.0195);transform-origin:0 0;">Toutes Variantes</span>
<div style="left:24px;top:692px;width:1871px;height:432px;background:#ffffff;border:1px solid #dcdcdc;"></div>
<div style="left:25px;top:693px;width:1869px;height:20px;background:linear-gradient(#f9f9f9,#f4f4f4 45%,#e7e7e7);"></div>
<div style="left:25px;top:713px;width:18px;height:20px;background:#f0f0f0;"></div>
<div style="left:25px;top:712px;width:1869px;height:1px;background:#d4d4d4;"></div>
<div style="left:25px;top:733px;width:1869px;height:1px;background:#d9d9d9;"></div>
<div style="left:42px;top:694px;width:1px;height:20px;background:#d4d4d4;"></div>
<div style="left:42px;top:714px;width:1px;height:20px;background:#e0e0e0;"></div>
<svg style="left:30.6px;top:718px" width="6" height="9.4" viewBox="0 0 6 9.4"><path d="M0.2 0L6 4.7L0.2 9.4z" fill="#333"/></svg>
<div style="left:142px;top:694px;width:1px;height:20px;background:#d4d4d4;"></div>
<div style="left:142px;top:714px;width:1px;height:20px;background:#e0e0e0;"></div>
<span class="t" style="left:61.00px;top:696px;font-size:12.5px;color:#444;transform:scaleX(0.9214);transform-origin:0 0;">Article</span>
<svg style="left:130.7px;top:698px" width="8" height="8" viewBox="0 0 8 8"><path d="M0.6 0.5H7.4L4.7 3.4V7L3.3 6.2V3.4Z" fill="none" stroke="#6c6c6c" stroke-width="1.1"/></svg>
<div style="left:242px;top:694px;width:1px;height:20px;background:#d4d4d4;"></div>
<div style="left:242px;top:714px;width:1px;height:20px;background:#e0e0e0;"></div>
<span class="t" style="left:165.00px;top:696px;font-size:12.5px;color:#444;transform:scaleX(0.8985);transform-origin:0 0;">Variante</span>
<svg style="left:230.7px;top:698px" width="8" height="8" viewBox="0 0 8 8"><path d="M0.6 0.5H7.4L4.7 3.4V7L3.3 6.2V3.4Z" fill="none" stroke="#6c6c6c" stroke-width="1.1"/></svg>
<div style="left:376px;top:694px;width:1px;height:20px;background:#d4d4d4;"></div>
<div style="left:376px;top:714px;width:1px;height:20px;background:#e0e0e0;"></div>
<span class="t" style="left:251.00px;top:696px;font-size:12.5px;color:#444;transform:scaleX(0.9035);transform-origin:0 0;">Description_Variante</span>
<svg style="left:364.7px;top:698px" width="8" height="8" viewBox="0 0 8 8"><path d="M0.6 0.5H7.4L4.7 3.4V7L3.3 6.2V3.4Z" fill="none" stroke="#6c6c6c" stroke-width="1.1"/></svg>
<div style="left:476px;top:694px;width:1px;height:20px;background:#d4d4d4;"></div>
<div style="left:476px;top:714px;width:1px;height:20px;background:#e0e0e0;"></div>
<span class="t" style="left:398.00px;top:696px;font-size:12.5px;color:#444;transform:scaleX(0.8634);transform-origin:0 0;">Lieu_Stk</span>
<svg style="left:464.7px;top:698px" width="8" height="8" viewBox="0 0 8 8"><path d="M0.6 0.5H7.4L4.7 3.4V7L3.3 6.2V3.4Z" fill="none" stroke="#6c6c6c" stroke-width="1.1"/></svg>
<div style="left:576px;top:694px;width:1px;height:20px;background:#d4d4d4;"></div>
<div style="left:576px;top:714px;width:1px;height:20px;background:#e0e0e0;"></div>
<span class="t" style="left:486.00px;top:696px;font-size:12.5px;color:#444;transform:scaleX(0.8767);transform-origin:0 0;">Emplacement</span>
<svg style="left:564.7px;top:698px" width="8" height="8" viewBox="0 0 8 8"><path d="M0.6 0.5H7.4L4.7 3.4V7L3.3 6.2V3.4Z" fill="none" stroke="#6c6c6c" stroke-width="1.1"/></svg>
<div style="left:657px;top:694px;width:1px;height:20px;background:#d4d4d4;"></div>
<div style="left:657px;top:714px;width:1px;height:20px;background:#e0e0e0;"></div>
<span class="t" style="left:590.00px;top:696px;font-size:12.5px;color:#444;transform:scaleX(0.8888);transform-origin:0 0;">Quantité</span>
<svg style="left:645.7px;top:698px" width="8" height="8" viewBox="0 0 8 8"><path d="M0.6 0.5H7.4L4.7 3.4V7L3.3 6.2V3.4Z" fill="none" stroke="#6c6c6c" stroke-width="1.1"/></svg>
<div style="left:757px;top:694px;width:1px;height:20px;background:#d4d4d4;"></div>
<div style="left:757px;top:714px;width:1px;height:20px;background:#e0e0e0;"></div>
<span class="t" style="left:670.00px;top:696px;font-size:12.5px;color:#444;transform:scaleX(0.8748);transform-origin:0 0;">Statut_Stock</span>
<svg style="left:745.7px;top:698px" width="8" height="8" viewBox="0 0 8 8"><path d="M0.6 0.5H7.4L4.7 3.4V7L3.3 6.2V3.4Z" fill="none" stroke="#6c6c6c" stroke-width="1.1"/></svg>
<div style="left:857px;top:694px;width:1px;height:20px;background:#d4d4d4;"></div>
<div style="left:857px;top:714px;width:1px;height:20px;background:#e0e0e0;"></div>
<span class="t" style="left:783.00px;top:696px;font-size:12.5px;color:#444;transform:scaleX(0.8683);transform-origin:0 0;">No_Lot</span>
<svg style="left:845.7px;top:698px" width="8" height="8" viewBox="0 0 8 8"><path d="M0.6 0.5H7.4L4.7 3.4V7L3.3 6.2V3.4Z" fill="none" stroke="#6c6c6c" stroke-width="1.1"/></svg>
<div style="left:990px;top:694px;width:1px;height:20px;background:#d4d4d4;"></div>
<div style="left:990px;top:714px;width:1px;height:20px;background:#e0e0e0;"></div>
<span class="t" style="left:868.00px;top:696px;font-size:12.5px;color:#444;transform:scaleX(0.8635);transform-origin:0 0;">No_Série_ou_SSCC</span>
<svg style="left:978.7px;top:698px" width="8" height="8" viewBox="0 0 8 8"><path d="M0.6 0.5H7.4L4.7 3.4V7L3.3 6.2V3.4Z" fill="none" stroke="#6c6c6c" stroke-width="1.1"/></svg>
<div style="left:1082px;top:694px;width:1px;height:20px;background:#d4d4d4;"></div>
<div style="left:1082px;top:714px;width:1px;height:20px;background:#e0e0e0;"></div>
<span class="t" style="left:998.00px;top:696px;font-size:12.5px;color:#444;transform:scaleX(0.9067);transform-origin:0 0;">Prix_unitaire</span>
<svg style="left:1070.7px;top:698px" width="8" height="8" viewBox="0 0 8 8"><path d="M0.6 0.5H7.4L4.7 3.4V7L3.3 6.2V3.4Z" fill="none" stroke="#6c6c6c" stroke-width="1.1"/></svg>
<div style="left:1163px;top:694px;width:1px;height:20px;background:#d4d4d4;"></div>
<div style="left:1163px;top:714px;width:1px;height:20px;background:#e0e0e0;"></div>
<span class="t" style="left:1105.00px;top:696px;font-size:12.5px;color:#444;transform:scaleX(0.9374);transform-origin:0 0;">Titre</span>
<svg style="left:1151.7px;top:698px" width="8" height="8" viewBox="0 0 8 8"><path d="M0.6 0.5H7.4L4.7 3.4V7L3.3 6.2V3.4Z" fill="none" stroke="#6c6c6c" stroke-width="1.1"/></svg>
<div style="left:1277px;top:694px;width:1px;height:20px;background:#d4d4d4;"></div>
<div style="left:1277px;top:714px;width:1px;height:20px;background:#e0e0e0;"></div>
<span class="t" style="left:1173.00px;top:696px;font-size:12.5px;color:#444;transform:scaleX(0.8806);transform-origin:0 0;">Date_Production</span>
<svg style="left:1265.7px;top:698px" width="8" height="8" viewBox="0 0 8 8"><path d="M0.6 0.5H7.4L4.7 3.4V7L3.3 6.2V3.4Z" fill="none" stroke="#6c6c6c" stroke-width="1.1"/></svg>
<div style="left:1379px;top:694px;width:1px;height:20px;background:#d4d4d4;"></div>
<div style="left:1379px;top:714px;width:1px;height:20px;background:#e0e0e0;"></div>
<span class="t" style="left:1286.00px;top:696px;font-size:12.5px;color:#444;transform:scaleX(0.8808);transform-origin:0 0;">Date_Création</span>
<svg style="left:1367.7px;top:698px" width="8" height="8" viewBox="0 0 8 8"><path d="M0.6 0.5H7.4L4.7 3.4V7L3.3 6.2V3.4Z" fill="none" stroke="#6c6c6c" stroke-width="1.1"/></svg>
<div style="left:1514px;top:694px;width:1px;height:20px;background:#d4d4d4;"></div>
<div style="left:1514px;top:714px;width:1px;height:20px;background:#e0e0e0;"></div>
<span class="t" style="left:1388.00px;top:696px;font-size:12.5px;color:#444;transform:scaleX(0.9049);transform-origin:0 0;">Prix_Unitaire_origine</span>
<svg style="left:1502.7px;top:698px" width="8" height="8" viewBox="0 0 8 8"><path d="M0.6 0.5H7.4L4.7 3.4V7L3.3 6.2V3.4Z" fill="none" stroke="#6c6c6c" stroke-width="1.1"/></svg>
<div style="left:1602px;top:694px;width:1px;height:20px;background:#d4d4d4;"></div>
<div style="left:1602px;top:714px;width:1px;height:20px;background:#e0e0e0;"></div>
<span class="t" style="left:1523.00px;top:696px;font-size:12.5px;color:#444;transform:scaleX(0.8823);transform-origin:0 0;">Stock_Maxi</span>
<svg style="left:1590.7px;top:698px" width="8" height="8" viewBox="0 0 8 8"><path d="M0.6 0.5H7.4L4.7 3.4V7L3.3 6.2V3.4Z" fill="none" stroke="#6c6c6c" stroke-width="1.1"/></svg>
<div style="left:1726px;top:694px;width:1px;height:20px;background:#d4d4d4;"></div>
<div style="left:1726px;top:714px;width:1px;height:20px;background:#e0e0e0;"></div>
<span class="t" style="left:1611.00px;top:696px;font-size:12.5px;color:#444;transform:scaleX(0.9079);transform-origin:0 0;">Taux_Dépréciation</span>
<svg style="left:1714.7px;top:698px" width="8" height="8" viewBox="0 0 8 8"><path d="M0.6 0.5H7.4L4.7 3.4V7L3.3 6.2V3.4Z" fill="none" stroke="#6c6c6c" stroke-width="1.1"/></svg>
<div style="left:1829px;top:694px;width:1px;height:20px;background:#d4d4d4;"></div>
<div style="left:1829px;top:714px;width:1px;height:20px;background:#e0e0e0;"></div>
<span class="t" style="left:1735.00px;top:696px;font-size:12.5px;color:#444;transform:scaleX(0.898);transform-origin:0 0;">Poids_Unitaire</span>
<svg style="left:1817.7px;top:698px" width="8" height="8" viewBox="0 0 8 8"><path d="M0.6 0.5H7.4L4.7 3.4V7L3.3 6.2V3.4Z" fill="none" stroke="#6c6c6c" stroke-width="1.1"/></svg>
<div style="left:1893px;top:694px;width:1px;height:20px;background:#d4d4d4;"></div>
<div style="left:1893px;top:714px;width:1px;height:20px;background:#e0e0e0;"></div>
<div style="left:1830px;top:694px;width:64px;height:19px;overflow:hidden"><span class="t" style="left:13px;top:2px;font-size:12.5px;color:#444;transform:scaleX(0.93);transform-origin:0 0">Unité_Poids</span></div>
<span class="t" style="left:49.00px;top:715px;font-size:12px;color:#333;transform:scaleX(0.9136);transform-origin:0 0;">RPMØ6ZB</span>
<span class="t" style="left:383.00px;top:715px;font-size:12px;color:#333;transform:scaleX(0.9133);transform-origin:0 0;">ST-BARTH</span>
<span class="t" style="left:483.00px;top:715px;font-size:12px;color:#333;transform:scaleX(0.9133);transform-origin:0 0;">B1-RECEPTION</span>
<span class="t" style="left:646.33px;top:715px;font-size:12px;color:#333;">4</span>
<span class="t" style="left:664.00px;top:715px;font-size:12px;color:#333;">N</span>
<span class="t" style="left:1068.00px;top:715px;font-size:12px;color:#333;transform:scaleX(0.8241);transform-origin:0 0;">12</span>
<span class="t" style="left:1152.33px;top:715px;font-size:12px;color:#333;">0</span>
<span class="t" style="left:1195.00px;top:714px;font-size:12px;color:#333;transform:scaleX(0.9126);transform-origin:0 0;">11/04/2019</span>
<span class="t" style="left:1303.00px;top:714px;font-size:12px;color:#333;transform:scaleX(0.9126);transform-origin:0 0;">11/04/2019</span>
<span class="t" style="left:1591.33px;top:715px;font-size:12px;color:#333;">0</span>
<span class="t" style="left:1715.33px;top:715px;font-size:12px;color:#333;">0</span>
<span class="t" style="left:1818.33px;top:715px;font-size:12px;color:#333;">0</span>
<div style="left:25px;top:1107px;width:1869px;height:18px;background:#d7d7d7;"></div>
<div style="left:25px;top:1107px;width:4px;height:17px;background:#f6f6f6;"></div>
<div style="left:29px;top:1107px;width:17px;height:17px;background:#fff;border:1px solid #ababab;"></div>
<svg style="left:35px;top:1113px" width="3.2" height="5" viewBox="0 0 3.2 5"><path d="M3.2 0L0 2.5L3.2 5z" fill="#444"/></svg>
<div style="left:46px;top:1107px;width:889px;height:17px;background:#fff;border:1px solid #ababab;"></div>
<div style="left:1877px;top:1107px;width:17px;height:17px;background:#fff;border:1px solid #ababab;"></div>
<svg style="left:1884px;top:1113px" width="3.2" height="5" viewBox="0 0 3.2 5"><path d="M0 0L3.2 2.5L0 5z" fill="#444"/></svg>
</div></body></html>
